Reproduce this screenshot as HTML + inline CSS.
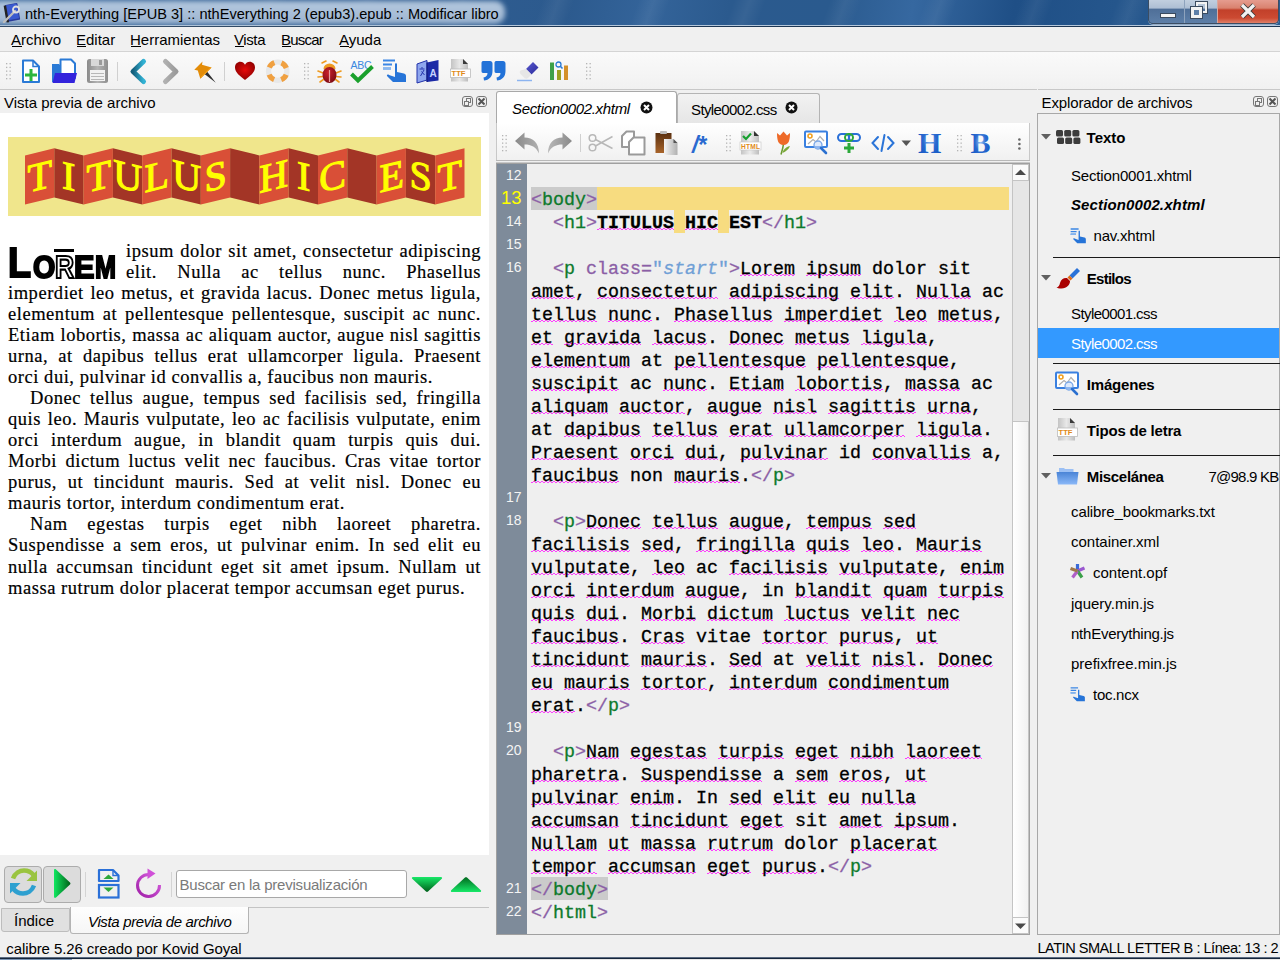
<!DOCTYPE html><html><head><meta charset="utf-8"><style>
html,body{margin:0;padding:0;width:1280px;height:960px;overflow:hidden;background:#f0f0f0;font-family:"Liberation Sans",sans-serif;}
#root{position:relative;width:1280px;height:960px;overflow:hidden;background:#f0f0f0;}
.wv{background-image:linear-gradient(90deg,#ff3cff 0,#ff3cff 2px,transparent 2px),linear-gradient(90deg,#ff3cff 0,#ff3cff 2px,transparent 2px);background-size:4px 1.4px,4px 1.4px;background-position:0 calc(100% - 3px),2px calc(100% - 4px);background-repeat:repeat-x;}
svg{position:absolute;overflow:visible}
</style></head><body><div id="root">
<div style="position:absolute;left:0px;top:0px;width:1280px;height:27px;background:linear-gradient(100deg,#3c6a9c 0px,#325f92 300px,#2c5a8e 560px,#34649a 640px,#2b5a8e 720px,#2a5a8e 820px,#3668a0 900px,#1f4f86 1000px,#25568c 1100px,#2c5d92 1280px)"></div>
<div style="position:absolute;left:0px;top:0px;width:1280px;height:27px;background:repeating-linear-gradient(110deg,rgba(255,255,255,0) 0px,rgba(255,255,255,0) 60px,rgba(255,255,255,0.06) 75px,rgba(255,255,255,0) 90px);"></div>
<div style="position:absolute;left:0px;top:25px;width:1280px;height:1px;background:#b5c8dc"></div>
<div style="position:absolute;left:0px;top:26px;width:1280px;height:1px;background:#1d3653"></div>
<div style="position:absolute;left:-10px;top:1px;width:515px;height:23px;background:linear-gradient(#b4c8de,#a9bfd8 50%,#9cb4d0);border-radius:10px;filter:blur(2.5px);"></div>
<div style="position:absolute;left:25.00px;top:6.84px;font-size:14.6px;line-height:14.6px;font-family:'Liberation Sans', sans-serif;white-space:pre;color:#000;">nth-Everything [EPUB 3] :: nthEverything 2 (epub3).epub :: Modificar libro</div>
<div style="position:absolute;left:1148px;top:-2px;width:129px;height:25px;border:1px solid #3b4d63;border-top:none;border-radius:0 0 5px 5px;overflow:hidden;box-shadow:0 1px 0 rgba(255,255,255,0.5);">
<div style="position:absolute;left:0;top:0;width:35px;height:25px;background:linear-gradient(#c6d3e2 0%,#aebfd4 40%,#4f6f98 45%,#5d7fa8 100%);"></div>
<div style="position:absolute;left:35px;top:0;width:1px;height:25px;background:#8ea3bd"></div>
<div style="position:absolute;left:36px;top:0;width:32px;height:25px;background:linear-gradient(#c6d3e2 0%,#aebfd4 40%,#4f6f98 45%,#5d7fa8 100%);"></div>
<div style="position:absolute;left:68px;top:0;width:1px;height:25px;background:#d9a79e"></div>
<div style="position:absolute;left:69px;top:0;width:60px;height:25px;background:linear-gradient(#e8a397 0%,#d9826f 40%,#c2402a 48%,#cc4a32 80%,#e08068 100%);"></div>
</div>
<div style="position:absolute;left:1160px;top:13px;width:16px;height:5px;background:#f4f4f4;border:1px solid #3a4a5e;box-sizing:border-box;"></div>
<div style="position:absolute;left:1191px;top:2px;width:16px;height:15px;"><div style="position:absolute;left:5px;top:0;width:11px;height:11px;border:2px solid #f2f2f2;box-sizing:border-box;outline:1px solid #3a4a5e;"></div><div style="position:absolute;left:0;top:5px;width:11px;height:11px;background:#5d7fa8;border:3px solid #f2f2f2;box-sizing:border-box;outline:1px solid #3a4a5e;"></div></div>
<svg style="left:1240px;top:4px" width="16" height="14" viewBox="0 0 16 14"><path d="M2 1 L14 13 M14 1 L2 13" stroke="#3a3a3a" stroke-width="5.2" stroke-linecap="butt"/><path d="M2 1 L14 13 M14 1 L2 13" stroke="#f2f2f2" stroke-width="3.2"/></svg>
<div style="position:absolute;left:0px;top:27px;width:1280px;height:24px;background:#f0f0f0"></div>
<div style="position:absolute;left:0px;top:51px;width:1280px;height:1px;background:#d4d4d4"></div>
<div style="position:absolute;left:11.00px;top:31.90px;font-size:15px;line-height:15px;font-family:'Liberation Sans', sans-serif;white-space:pre;letter-spacing:0px;">Archivo</div>
<div style="position:absolute;left:12px;top:46px;width:10px;height:1px;background:#000"></div>
<div style="position:absolute;left:76.00px;top:31.90px;font-size:15px;line-height:15px;font-family:'Liberation Sans', sans-serif;white-space:pre;letter-spacing:0px;">Editar</div>
<div style="position:absolute;left:77px;top:46px;width:9px;height:1px;background:#000"></div>
<div style="position:absolute;left:130.00px;top:31.90px;font-size:15px;line-height:15px;font-family:'Liberation Sans', sans-serif;white-space:pre;letter-spacing:0px;">Herramientas</div>
<div style="position:absolute;left:131px;top:46px;width:10px;height:1px;background:#000"></div>
<div style="position:absolute;left:234.00px;top:31.90px;font-size:15px;line-height:15px;font-family:'Liberation Sans', sans-serif;white-space:pre;letter-spacing:-0.4px;">Vista</div>
<div style="position:absolute;left:235px;top:46px;width:9px;height:1px;background:#000"></div>
<div style="position:absolute;left:281.00px;top:31.90px;font-size:15px;line-height:15px;font-family:'Liberation Sans', sans-serif;white-space:pre;letter-spacing:-0.77px;">Buscar</div>
<div style="position:absolute;left:282px;top:46px;width:9px;height:1px;background:#000"></div>
<div style="position:absolute;left:339.00px;top:31.90px;font-size:15px;line-height:15px;font-family:'Liberation Sans', sans-serif;white-space:pre;letter-spacing:0px;">Ayuda</div>
<div style="position:absolute;left:340px;top:46px;width:9px;height:1px;background:#000"></div>
<div style="position:absolute;left:0px;top:52px;width:1280px;height:37px;background:linear-gradient(#fafafa,#f1f1f1)"></div>
<div style="position:absolute;left:0px;top:89px;width:1280px;height:1px;background:#c8c8c8"></div>
<div style="position:absolute;left:4.00px;top:94.80px;font-size:15px;line-height:15px;font-family:'Liberation Sans', sans-serif;white-space:pre;">Vista previa de archivo</div>
<div style="position:absolute;left:462px;top:96px;width:11px;height:11px;border:1px solid #777;border-radius:3px;box-sizing:border-box;"></div>
<div style="position:absolute;left:466px;top:98px;width:5px;height:5px;border:1px solid #777;box-sizing:border-box;"></div>
<div style="position:absolute;left:464px;top:101px;width:5px;height:5px;border:1px solid #777;background:#f0f0f0;box-sizing:border-box;"></div>
<div style="position:absolute;left:476px;top:96px;width:11px;height:11px;border:1px solid #777;border-radius:3px;box-sizing:border-box;"></div>
<svg style="left:476px;top:96px" width="11" height="11"><path d="M2.5 2.5 L8.5 8.5 M8.5 2.5 L2.5 8.5" stroke="#555" stroke-width="2"/></svg>
<div style="position:absolute;left:0px;top:113px;width:489px;height:742px;background:#fff"></div>
<div style="position:absolute;left:8px;top:137px;width:473px;height:79px;background:#f0e68c"></div>
<svg style="left:0;top:0" width="1" height="1"><polygon points="25.00,155.4 54.30,148.2 54.30,197.4 25.00,204.6" fill="#d94f37"/></svg>
<svg style="left:0;top:0" width="1" height="1"><polygon points="54.30,148.2 83.60,155.4 83.60,204.6 54.30,197.4" fill="#a33526"/></svg>
<svg style="left:0;top:0" width="1" height="1"><polygon points="83.60,155.4 112.90,148.2 112.90,197.4 83.60,204.6" fill="#d94f37"/></svg>
<svg style="left:0;top:0" width="1" height="1"><polygon points="112.90,148.2 142.20,155.4 142.20,204.6 112.90,197.4" fill="#a33526"/></svg>
<svg style="left:0;top:0" width="1" height="1"><polygon points="142.20,155.4 171.50,148.2 171.50,197.4 142.20,204.6" fill="#d94f37"/></svg>
<svg style="left:0;top:0" width="1" height="1"><polygon points="171.50,148.2 200.80,155.4 200.80,204.6 171.50,197.4" fill="#a33526"/></svg>
<svg style="left:0;top:0" width="1" height="1"><polygon points="200.80,155.4 230.10,148.2 230.10,197.4 200.80,204.6" fill="#d94f37"/></svg>
<svg style="left:0;top:0" width="1" height="1"><polygon points="230.10,148.2 259.40,155.4 259.40,204.6 230.10,197.4" fill="#a33526"/></svg>
<svg style="left:0;top:0" width="1" height="1"><polygon points="259.40,155.4 288.70,148.2 288.70,197.4 259.40,204.6" fill="#d94f37"/></svg>
<svg style="left:0;top:0" width="1" height="1"><polygon points="288.70,148.2 318.00,155.4 318.00,204.6 288.70,197.4" fill="#a33526"/></svg>
<svg style="left:0;top:0" width="1" height="1"><polygon points="318.00,155.4 347.30,148.2 347.30,197.4 318.00,204.6" fill="#d94f37"/></svg>
<svg style="left:0;top:0" width="1" height="1"><polygon points="347.30,148.2 376.60,155.4 376.60,204.6 347.30,197.4" fill="#a33526"/></svg>
<svg style="left:0;top:0" width="1" height="1"><polygon points="376.60,155.4 405.90,148.2 405.90,197.4 376.60,204.6" fill="#d94f37"/></svg>
<svg style="left:0;top:0" width="1" height="1"><polygon points="405.90,148.2 435.20,155.4 435.20,204.6 405.90,197.4" fill="#a33526"/></svg>
<svg style="left:0;top:0" width="1" height="1"><polygon points="435.20,155.4 464.50,148.2 464.50,197.4 435.20,204.6" fill="#d94f37"/></svg>
<div style="position:absolute;left:25.00px;top:148px;width:29.30px;height:57px;transform:skewY(-13.8deg);transform-origin:0 0;"><div style="position:absolute;left:0;width:29.30px;top:11.5px;text-align:center;font-family:'Liberation Serif',serif;font-size:40px;line-height:40px;color:#ffff00;-webkit-text-stroke:1.1px #ffff00;">T</div></div>
<div style="position:absolute;left:54.30px;top:148px;width:29.30px;height:57px;transform:skewY(13.8deg);transform-origin:0 0;"><div style="position:absolute;left:0;width:29.30px;top:4.5px;text-align:center;font-family:'Liberation Serif',serif;font-size:40px;line-height:40px;color:#ffff00;-webkit-text-stroke:1.1px #ffff00;">I</div></div>
<div style="position:absolute;left:83.60px;top:148px;width:29.30px;height:57px;transform:skewY(-13.8deg);transform-origin:0 0;"><div style="position:absolute;left:0;width:29.30px;top:11.5px;text-align:center;font-family:'Liberation Serif',serif;font-size:40px;line-height:40px;color:#ffff00;-webkit-text-stroke:1.1px #ffff00;">T</div></div>
<div style="position:absolute;left:112.90px;top:148px;width:29.30px;height:57px;transform:skewY(13.8deg);transform-origin:0 0;"><div style="position:absolute;left:0;width:29.30px;top:4.5px;text-align:center;font-family:'Liberation Serif',serif;font-size:40px;line-height:40px;color:#ffff00;-webkit-text-stroke:1.1px #ffff00;">U</div></div>
<div style="position:absolute;left:142.20px;top:148px;width:29.30px;height:57px;transform:skewY(-13.8deg);transform-origin:0 0;"><div style="position:absolute;left:0;width:29.30px;top:11.5px;text-align:center;font-family:'Liberation Serif',serif;font-size:40px;line-height:40px;color:#ffff00;-webkit-text-stroke:1.1px #ffff00;">L</div></div>
<div style="position:absolute;left:171.50px;top:148px;width:29.30px;height:57px;transform:skewY(13.8deg);transform-origin:0 0;"><div style="position:absolute;left:0;width:29.30px;top:4.5px;text-align:center;font-family:'Liberation Serif',serif;font-size:40px;line-height:40px;color:#ffff00;-webkit-text-stroke:1.1px #ffff00;">U</div></div>
<div style="position:absolute;left:200.80px;top:148px;width:29.30px;height:57px;transform:skewY(-13.8deg);transform-origin:0 0;"><div style="position:absolute;left:0;width:29.30px;top:11.5px;text-align:center;font-family:'Liberation Serif',serif;font-size:40px;line-height:40px;color:#ffff00;-webkit-text-stroke:1.1px #ffff00;">S</div></div>
<div style="position:absolute;left:259.40px;top:148px;width:29.30px;height:57px;transform:skewY(-13.8deg);transform-origin:0 0;"><div style="position:absolute;left:0;width:29.30px;top:11.5px;text-align:center;font-family:'Liberation Serif',serif;font-size:40px;line-height:40px;color:#ffff00;-webkit-text-stroke:1.1px #ffff00;">H</div></div>
<div style="position:absolute;left:288.70px;top:148px;width:29.30px;height:57px;transform:skewY(13.8deg);transform-origin:0 0;"><div style="position:absolute;left:0;width:29.30px;top:4.5px;text-align:center;font-family:'Liberation Serif',serif;font-size:40px;line-height:40px;color:#ffff00;-webkit-text-stroke:1.1px #ffff00;">I</div></div>
<div style="position:absolute;left:318.00px;top:148px;width:29.30px;height:57px;transform:skewY(-13.8deg);transform-origin:0 0;"><div style="position:absolute;left:0;width:29.30px;top:11.5px;text-align:center;font-family:'Liberation Serif',serif;font-size:40px;line-height:40px;color:#ffff00;-webkit-text-stroke:1.1px #ffff00;">C</div></div>
<div style="position:absolute;left:376.60px;top:148px;width:29.30px;height:57px;transform:skewY(-13.8deg);transform-origin:0 0;"><div style="position:absolute;left:0;width:29.30px;top:11.5px;text-align:center;font-family:'Liberation Serif',serif;font-size:40px;line-height:40px;color:#ffff00;-webkit-text-stroke:1.1px #ffff00;">E</div></div>
<div style="position:absolute;left:405.90px;top:148px;width:29.30px;height:57px;transform:skewY(13.8deg);transform-origin:0 0;"><div style="position:absolute;left:0;width:29.30px;top:4.5px;text-align:center;font-family:'Liberation Serif',serif;font-size:40px;line-height:40px;color:#ffff00;-webkit-text-stroke:1.1px #ffff00;">S</div></div>
<div style="position:absolute;left:435.20px;top:148px;width:29.30px;height:57px;transform:skewY(-13.8deg);transform-origin:0 0;"><div style="position:absolute;left:0;width:29.30px;top:11.5px;text-align:center;font-family:'Liberation Serif',serif;font-size:40px;line-height:40px;color:#ffff00;-webkit-text-stroke:1.1px #ffff00;">T</div></div>
<div style="position:absolute;left:8px;top:243px;font-family:'Liberation Sans',sans-serif;font-weight:bold;color:#000;white-space:pre;-webkit-text-stroke:2px #000;"><span style="position:absolute;left:0px;top:-1px;font-size:42px;line-height:42px;display:inline-block;transform:scaleX(0.9);transform-origin:0 0">L</span><span style="position:absolute;left:24.5px;top:9px;font-size:31.5px;line-height:31.5px;display:inline-block;transform:scaleX(0.91);transform-origin:0 0">O</span><span style="position:absolute;left:46.5px;top:9px;font-size:31.5px;line-height:31.5px;display:inline-block;transform:scaleX(0.84);transform-origin:0 0;color:#fff;-webkit-text-stroke:2.2px #000;">R</span><span style="position:absolute;left:66px;top:9px;font-size:31.5px;line-height:31.5px;display:inline-block;transform:scaleX(0.97);transform-origin:0 0">E</span><span style="position:absolute;left:86.5px;top:9px;font-size:31.5px;line-height:31.5px;display:inline-block;transform:scaleX(0.8);transform-origin:0 0">M</span></div>
<div style="position:absolute;left:54px;top:249px;width:20px;height:3px;background:#000"></div>
<div style="position:absolute;left:126px;top:241.61px;width:355px;font-family:'Liberation Serif',serif;font-size:18.5px;line-height:18.5px;letter-spacing:0.54px;-webkit-text-stroke:0.2px #000;text-align:justify;text-align-last:justify;white-space:nowrap;color:#000;">ipsum dolor sit amet, consectetur adipiscing</div>
<div style="position:absolute;left:126px;top:262.67px;width:355px;font-family:'Liberation Serif',serif;font-size:18.5px;line-height:18.5px;letter-spacing:0.54px;-webkit-text-stroke:0.2px #000;text-align:justify;text-align-last:justify;white-space:nowrap;color:#000;">elit. Nulla ac tellus nunc. Phasellus</div>
<div style="position:absolute;left:8px;top:283.73px;width:473px;font-family:'Liberation Serif',serif;font-size:18.5px;line-height:18.5px;letter-spacing:0.54px;-webkit-text-stroke:0.2px #000;text-align:justify;text-align-last:justify;white-space:nowrap;color:#000;">imperdiet leo metus, et gravida lacus. Donec metus ligula,</div>
<div style="position:absolute;left:8px;top:304.79px;width:473px;font-family:'Liberation Serif',serif;font-size:18.5px;line-height:18.5px;letter-spacing:0.54px;-webkit-text-stroke:0.2px #000;text-align:justify;text-align-last:justify;white-space:nowrap;color:#000;">elementum at pellentesque pellentesque, suscipit ac nunc.</div>
<div style="position:absolute;left:8px;top:325.85px;width:473px;font-family:'Liberation Serif',serif;font-size:18.5px;line-height:18.5px;letter-spacing:0.54px;-webkit-text-stroke:0.2px #000;text-align:justify;text-align-last:justify;white-space:nowrap;color:#000;">Etiam lobortis, massa ac aliquam auctor, augue nisl sagittis</div>
<div style="position:absolute;left:8px;top:346.91px;width:473px;font-family:'Liberation Serif',serif;font-size:18.5px;line-height:18.5px;letter-spacing:0.54px;-webkit-text-stroke:0.2px #000;text-align:justify;text-align-last:justify;white-space:nowrap;color:#000;">urna, at dapibus tellus erat ullamcorper ligula. Praesent</div>
<div style="position:absolute;left:8px;top:367.97px;font-family:'Liberation Serif',serif;font-size:18.5px;line-height:18.5px;letter-spacing:0.54px;-webkit-text-stroke:0.2px #000;white-space:pre;color:#000;">orci dui, pulvinar id convallis a, faucibus non mauris.</div>
<div style="position:absolute;left:30px;top:389.03px;width:451px;font-family:'Liberation Serif',serif;font-size:18.5px;line-height:18.5px;letter-spacing:0.54px;-webkit-text-stroke:0.2px #000;text-align:justify;text-align-last:justify;white-space:nowrap;color:#000;">Donec tellus augue, tempus sed facilisis sed, fringilla</div>
<div style="position:absolute;left:8px;top:410.09px;width:473px;font-family:'Liberation Serif',serif;font-size:18.5px;line-height:18.5px;letter-spacing:0.54px;-webkit-text-stroke:0.2px #000;text-align:justify;text-align-last:justify;white-space:nowrap;color:#000;">quis leo. Mauris vulputate, leo ac facilisis vulputate, enim</div>
<div style="position:absolute;left:8px;top:431.15px;width:473px;font-family:'Liberation Serif',serif;font-size:18.5px;line-height:18.5px;letter-spacing:0.54px;-webkit-text-stroke:0.2px #000;text-align:justify;text-align-last:justify;white-space:nowrap;color:#000;">orci interdum augue, in blandit quam turpis quis dui.</div>
<div style="position:absolute;left:8px;top:452.21px;width:473px;font-family:'Liberation Serif',serif;font-size:18.5px;line-height:18.5px;letter-spacing:0.54px;-webkit-text-stroke:0.2px #000;text-align:justify;text-align-last:justify;white-space:nowrap;color:#000;">Morbi dictum luctus velit nec faucibus. Cras vitae tortor</div>
<div style="position:absolute;left:8px;top:473.27px;width:473px;font-family:'Liberation Serif',serif;font-size:18.5px;line-height:18.5px;letter-spacing:0.54px;-webkit-text-stroke:0.2px #000;text-align:justify;text-align-last:justify;white-space:nowrap;color:#000;">purus, ut tincidunt mauris. Sed at velit nisl. Donec eu</div>
<div style="position:absolute;left:8px;top:494.33px;font-family:'Liberation Serif',serif;font-size:18.5px;line-height:18.5px;letter-spacing:0.54px;-webkit-text-stroke:0.2px #000;white-space:pre;color:#000;">mauris tortor, interdum condimentum erat.</div>
<div style="position:absolute;left:30px;top:515.39px;width:451px;font-family:'Liberation Serif',serif;font-size:18.5px;line-height:18.5px;letter-spacing:0.54px;-webkit-text-stroke:0.2px #000;text-align:justify;text-align-last:justify;white-space:nowrap;color:#000;">Nam egestas turpis eget nibh laoreet pharetra.</div>
<div style="position:absolute;left:8px;top:536.45px;width:473px;font-family:'Liberation Serif',serif;font-size:18.5px;line-height:18.5px;letter-spacing:0.54px;-webkit-text-stroke:0.2px #000;text-align:justify;text-align-last:justify;white-space:nowrap;color:#000;">Suspendisse a sem eros, ut pulvinar enim. In sed elit eu</div>
<div style="position:absolute;left:8px;top:557.51px;width:473px;font-family:'Liberation Serif',serif;font-size:18.5px;line-height:18.5px;letter-spacing:0.54px;-webkit-text-stroke:0.2px #000;text-align:justify;text-align-last:justify;white-space:nowrap;color:#000;">nulla accumsan tincidunt eget sit amet ipsum. Nullam ut</div>
<div style="position:absolute;left:8px;top:578.57px;font-family:'Liberation Serif',serif;font-size:18.5px;line-height:18.5px;letter-spacing:0.54px;-webkit-text-stroke:0.2px #000;white-space:pre;color:#000;">massa rutrum dolor placerat tempor accumsan eget purus.</div>
<div style="position:absolute;left:0px;top:855px;width:489px;height:53px;background:#f0f0f0"></div>
<div style="position:absolute;left:176px;top:870px;width:231px;height:28px;background:#fff;border:1px solid #a8a8a8;border-radius:3px;box-sizing:border-box;"></div>
<div style="position:absolute;left:179.50px;top:877.30px;font-size:15px;line-height:15px;font-family:'Liberation Sans', sans-serif;white-space:pre;color:#7a7a7a;letter-spacing:-0.22px;">Buscar en la previsualización</div>
<div style="position:absolute;left:249px;top:907px;width:240px;height:1px;background:#c4c4c4"></div>
<div style="position:absolute;left:1px;top:908px;width:69px;height:24px;background:#e0e0e0;border:1px solid #bdbdbd;border-radius:0 0 3px 3px;box-sizing:border-box;"></div>
<div style="position:absolute;left:14.00px;top:912.80px;font-size:15px;line-height:15px;font-family:'Liberation Sans', sans-serif;white-space:pre;">Índice</div>
<div style="position:absolute;left:70px;top:907px;width:179px;height:27px;background:linear-gradient(#fefefe,#f6f6f6);border:1px solid #b4b4b4;border-top:none;border-radius:0 0 3px 3px;box-sizing:border-box;"></div>
<div style="position:absolute;left:88.00px;top:913.80px;font-size:15px;line-height:15px;font-family:'Liberation Sans', sans-serif;white-space:pre;font-style:italic;letter-spacing:-0.35px;">Vista previa de archivo</div>
<div style="position:absolute;left:6.30px;top:940.60px;font-size:15px;line-height:15px;font-family:'Liberation Sans', sans-serif;white-space:pre;letter-spacing:-0.09px;">calibre 5.26 creado por Kovid Goyal</div>
<div style="position:absolute;left:1037.40px;top:941.34px;font-size:14.6px;line-height:14.6px;font-family:'Liberation Sans', sans-serif;white-space:pre;letter-spacing:-0.5px;">LATIN SMALL LETTER B : Línea: 13 : 2</div>
<div style="position:absolute;left:0px;top:957px;width:1280px;height:1px;background:#5a6a80"></div>
<div style="position:absolute;left:0px;top:958px;width:1280px;height:1px;background:#15253a"></div>
<div style="position:absolute;left:0px;top:959px;width:72px;height:1px;background:#7a94b4"></div>
<div style="position:absolute;left:72px;top:959px;width:1208px;height:1px;background:#e8e8e8"></div>
<div style="position:absolute;left:496px;top:91px;width:181px;height:33px;background:#fff;border:1px solid #a9a9a9;border-bottom:none;border-radius:3px 3px 0 0;box-sizing:border-box;"></div>
<div style="position:absolute;left:512.00px;top:100.50px;font-size:15px;line-height:15px;font-family:'Liberation Sans', sans-serif;white-space:pre;font-style:italic;letter-spacing:-0.33px;">Section0002.xhtml</div>
<div style="position:absolute;left:677px;top:93px;width:143px;height:30px;background:linear-gradient(#f2f2f2,#e6e6e6);border:1px solid #b4b4b4;border-bottom:none;border-radius:3px 3px 0 0;box-sizing:border-box;"></div>
<div style="position:absolute;left:691.00px;top:101.60px;font-size:15px;line-height:15px;font-family:'Liberation Sans', sans-serif;white-space:pre;letter-spacing:-0.6px;">Style0002.css</div>
<svg style="left:640px;top:101px" width="13" height="13" viewBox="0 0 13 13"><circle cx="6.5" cy="6.5" r="6" fill="#111"/><path d="M4 4 L9 9 M9 4 L4 9" stroke="#fff" stroke-width="2"/></svg>
<svg style="left:785px;top:101px" width="13" height="13" viewBox="0 0 13 13"><circle cx="6.5" cy="6.5" r="6" fill="#111"/><path d="M4 4 L9 9 M9 4 L4 9" stroke="#fff" stroke-width="2"/></svg>
<div style="position:absolute;left:496px;top:123px;width:534px;height:38px;background:linear-gradient(#ffffff,#f0f0f0);border-left:1px solid #c8c8c8;border-right:1px solid #c8c8c8;box-sizing:border-box;"></div>
<div style="position:absolute;left:496px;top:160px;width:534px;height:1px;background:#b8b8b8"></div>
<div style="position:absolute;left:496px;top:162px;width:534px;height:1px;background:#c8c8c8"></div>
<div style="position:absolute;left:496px;top:163px;width:534px;height:772px;background:#efefef;border:1px solid #a0a0a0;box-sizing:border-box;"></div>
<div style="position:absolute;left:497px;top:164px;width:30px;height:770px;background:#7e8b9a"></div>
<div style="position:absolute;left:1012px;top:164px;width:17px;height:770px;background:#e6e6e6;border-left:1px solid #c4c4c4;box-sizing:border-box;"></div>
<div style="position:absolute;left:1012px;top:164px;width:17px;height:17px;background:#fbfbfb;border:1px solid #c4c4c4;box-sizing:border-box;"></div>
<svg style="left:1015px;top:169px" width="11" height="7"><path d="M0 6 L5.5 0.5 L11 6 Z" fill="#4a4a4a"/></svg>
<div style="position:absolute;left:1012px;top:421px;width:17px;height:513px;background:linear-gradient(90deg,#ffffff,#f1f1f1);border:1px solid #c4c4c4;box-sizing:border-box;"></div>
<div style="position:absolute;left:1012px;top:917px;width:17px;height:17px;background:#fbfbfb;border:1px solid #c4c4c4;box-sizing:border-box;"></div>
<svg style="left:1015px;top:923px" width="11" height="7"><path d="M0 0.5 L5.5 6 L11 0.5 Z" fill="#4a4a4a"/></svg>
<div style="position:absolute;left:531px;top:187px;width:478px;height:23px;background:#f7dc80"></div>
<div style="position:absolute;left:531px;top:187px;width:66px;height:23px;background:#cbcbcb"></div>
<div style="position:absolute;left:531px;top:877px;width:77px;height:23px;background:#cbcbcb"></div>
<div style="position:absolute;left:674px;top:210px;width:11px;height:23px;background:#f7dc80"></div>
<div style="position:absolute;left:718px;top:210px;width:11px;height:23px;background:#f7dc80"></div>
<div style="position:absolute;left:531.00px;top:168.85px;font-size:18.33px;line-height:18.33px;font-family:'Liberation Mono', monospace;white-space:pre;color:#000;-webkit-text-stroke:0.3px currentColor;"></div>
<div style="position:absolute;left:497px;width:24.5px;top:167.85px;font-size:14px;line-height:14px;text-align:right;color:#f4f4f4;font-weight:normal;">12</div>
<div style="position:absolute;left:531.00px;top:191.85px;font-size:18.33px;line-height:18.33px;font-family:'Liberation Mono', monospace;white-space:pre;color:#000;-webkit-text-stroke:0.3px currentColor;"><span style="color:#8b5fa6">&lt;</span><span style="color:#0d7a2c">body</span><span style="color:#8b5fa6">&gt;</span></div>
<div style="position:absolute;left:497px;width:24.5px;top:189.04px;font-size:18.5px;line-height:18.5px;text-align:right;color:#ffff00;font-weight:normal;">13</div>
<div style="position:absolute;left:531.00px;top:214.85px;font-size:18.33px;line-height:18.33px;font-family:'Liberation Mono', monospace;white-space:pre;color:#000;-webkit-text-stroke:0.3px currentColor;">  <span style="color:#8b5fa6">&lt;</span><span style="color:#0d7a2c">h1</span><span style="color:#8b5fa6">&gt;</span><b><span class="wv">TITULUS</span> <span class="wv">HIC</span> EST</b><span style="color:#8b5fa6">&lt;/</span><span style="color:#0d7a2c">h1</span><span style="color:#8b5fa6">&gt;</span></div>
<div style="position:absolute;left:497px;width:24.5px;top:213.85px;font-size:14px;line-height:14px;text-align:right;color:#f4f4f4;font-weight:normal;">14</div>
<div style="position:absolute;left:531.00px;top:237.85px;font-size:18.33px;line-height:18.33px;font-family:'Liberation Mono', monospace;white-space:pre;color:#000;-webkit-text-stroke:0.3px currentColor;"></div>
<div style="position:absolute;left:497px;width:24.5px;top:236.85px;font-size:14px;line-height:14px;text-align:right;color:#f4f4f4;font-weight:normal;">15</div>
<div style="position:absolute;left:531.00px;top:260.85px;font-size:18.33px;line-height:18.33px;font-family:'Liberation Mono', monospace;white-space:pre;color:#000;-webkit-text-stroke:0.3px currentColor;">  <span style="color:#8b5fa6">&lt;</span><span style="color:#0d7a2c">p</span> <span style="color:#8b5fa6">class=</span><span style="color:#6f9fd6">"<i>start</i>"</span><span style="color:#8b5fa6">&gt;</span><span class="wv">Lorem</span> <span class="wv">ipsum</span> dolor sit</div>
<div style="position:absolute;left:497px;width:24.5px;top:259.85px;font-size:14px;line-height:14px;text-align:right;color:#f4f4f4;font-weight:normal;">16</div>
<div style="position:absolute;left:531.00px;top:283.85px;font-size:18.33px;line-height:18.33px;font-family:'Liberation Mono', monospace;white-space:pre;color:#000;-webkit-text-stroke:0.3px currentColor;"><span class="wv">amet</span>, <span class="wv">consectetur</span> <span class="wv">adipiscing</span> <span class="wv">elit</span>. <span class="wv">Nulla</span> ac</div>
<div style="position:absolute;left:531.00px;top:306.85px;font-size:18.33px;line-height:18.33px;font-family:'Liberation Mono', monospace;white-space:pre;color:#000;-webkit-text-stroke:0.3px currentColor;"><span class="wv">tellus</span> <span class="wv">nunc</span>. <span class="wv">Phasellus</span> <span class="wv">imperdiet</span> <span class="wv">leo</span> <span class="wv">metus</span>,</div>
<div style="position:absolute;left:531.00px;top:329.85px;font-size:18.33px;line-height:18.33px;font-family:'Liberation Mono', monospace;white-space:pre;color:#000;-webkit-text-stroke:0.3px currentColor;"><span class="wv">et</span> <span class="wv">gravida</span> <span class="wv">lacus</span>. <span class="wv">Donec</span> <span class="wv">metus</span> <span class="wv">ligula</span>,</div>
<div style="position:absolute;left:531.00px;top:352.85px;font-size:18.33px;line-height:18.33px;font-family:'Liberation Mono', monospace;white-space:pre;color:#000;-webkit-text-stroke:0.3px currentColor;"><span class="wv">elementum</span> at <span class="wv">pellentesque</span> <span class="wv">pellentesque</span>,</div>
<div style="position:absolute;left:531.00px;top:375.85px;font-size:18.33px;line-height:18.33px;font-family:'Liberation Mono', monospace;white-space:pre;color:#000;-webkit-text-stroke:0.3px currentColor;"><span class="wv">suscipit</span> ac <span class="wv">nunc</span>. <span class="wv">Etiam</span> <span class="wv">lobortis</span>, <span class="wv">massa</span> ac</div>
<div style="position:absolute;left:531.00px;top:398.85px;font-size:18.33px;line-height:18.33px;font-family:'Liberation Mono', monospace;white-space:pre;color:#000;-webkit-text-stroke:0.3px currentColor;"><span class="wv">aliquam</span> <span class="wv">auctor</span>, <span class="wv">augue</span> <span class="wv">nisl</span> <span class="wv">sagittis</span> <span class="wv">urna</span>,</div>
<div style="position:absolute;left:531.00px;top:421.85px;font-size:18.33px;line-height:18.33px;font-family:'Liberation Mono', monospace;white-space:pre;color:#000;-webkit-text-stroke:0.3px currentColor;">at <span class="wv">dapibus</span> <span class="wv">tellus</span> <span class="wv">erat</span> <span class="wv">ullamcorper</span> <span class="wv">ligula</span>.</div>
<div style="position:absolute;left:531.00px;top:444.85px;font-size:18.33px;line-height:18.33px;font-family:'Liberation Mono', monospace;white-space:pre;color:#000;-webkit-text-stroke:0.3px currentColor;"><span class="wv">Praesent</span> <span class="wv">orci</span> <span class="wv">dui</span>, <span class="wv">pulvinar</span> id <span class="wv">convallis</span> a,</div>
<div style="position:absolute;left:531.00px;top:467.85px;font-size:18.33px;line-height:18.33px;font-family:'Liberation Mono', monospace;white-space:pre;color:#000;-webkit-text-stroke:0.3px currentColor;"><span class="wv">faucibus</span> non <span class="wv">mauris</span>.<span style="color:#8b5fa6">&lt;/</span><span style="color:#0d7a2c">p</span><span style="color:#8b5fa6">&gt;</span></div>
<div style="position:absolute;left:531.00px;top:490.85px;font-size:18.33px;line-height:18.33px;font-family:'Liberation Mono', monospace;white-space:pre;color:#000;-webkit-text-stroke:0.3px currentColor;"></div>
<div style="position:absolute;left:497px;width:24.5px;top:489.85px;font-size:14px;line-height:14px;text-align:right;color:#f4f4f4;font-weight:normal;">17</div>
<div style="position:absolute;left:531.00px;top:513.85px;font-size:18.33px;line-height:18.33px;font-family:'Liberation Mono', monospace;white-space:pre;color:#000;-webkit-text-stroke:0.3px currentColor;">  <span style="color:#8b5fa6">&lt;</span><span style="color:#0d7a2c">p</span><span style="color:#8b5fa6">&gt;</span><span class="wv">Donec</span> <span class="wv">tellus</span> <span class="wv">augue</span>, <span class="wv">tempus</span> <span class="wv">sed</span></div>
<div style="position:absolute;left:497px;width:24.5px;top:512.85px;font-size:14px;line-height:14px;text-align:right;color:#f4f4f4;font-weight:normal;">18</div>
<div style="position:absolute;left:531.00px;top:536.85px;font-size:18.33px;line-height:18.33px;font-family:'Liberation Mono', monospace;white-space:pre;color:#000;-webkit-text-stroke:0.3px currentColor;"><span class="wv">facilisis</span> <span class="wv">sed</span>, <span class="wv">fringilla</span> <span class="wv">quis</span> <span class="wv">leo</span>. <span class="wv">Mauris</span></div>
<div style="position:absolute;left:531.00px;top:559.85px;font-size:18.33px;line-height:18.33px;font-family:'Liberation Mono', monospace;white-space:pre;color:#000;-webkit-text-stroke:0.3px currentColor;"><span class="wv">vulputate</span>, <span class="wv">leo</span> ac <span class="wv">facilisis</span> <span class="wv">vulputate</span>, <span class="wv">enim</span></div>
<div style="position:absolute;left:531.00px;top:582.85px;font-size:18.33px;line-height:18.33px;font-family:'Liberation Mono', monospace;white-space:pre;color:#000;-webkit-text-stroke:0.3px currentColor;"><span class="wv">orci</span> <span class="wv">interdum</span> <span class="wv">augue</span>, in <span class="wv">blandit</span> <span class="wv">quam</span> <span class="wv">turpis</span></div>
<div style="position:absolute;left:531.00px;top:605.85px;font-size:18.33px;line-height:18.33px;font-family:'Liberation Mono', monospace;white-space:pre;color:#000;-webkit-text-stroke:0.3px currentColor;"><span class="wv">quis</span> <span class="wv">dui</span>. <span class="wv">Morbi</span> <span class="wv">dictum</span> <span class="wv">luctus</span> <span class="wv">velit</span> <span class="wv">nec</span></div>
<div style="position:absolute;left:531.00px;top:628.85px;font-size:18.33px;line-height:18.33px;font-family:'Liberation Mono', monospace;white-space:pre;color:#000;-webkit-text-stroke:0.3px currentColor;"><span class="wv">faucibus</span>. <span class="wv">Cras</span> vitae <span class="wv">tortor</span> <span class="wv">purus</span>, <span class="wv">ut</span></div>
<div style="position:absolute;left:531.00px;top:651.85px;font-size:18.33px;line-height:18.33px;font-family:'Liberation Mono', monospace;white-space:pre;color:#000;-webkit-text-stroke:0.3px currentColor;"><span class="wv">tincidunt</span> <span class="wv">mauris</span>. <span class="wv">Sed</span> at <span class="wv">velit</span> <span class="wv">nisl</span>. <span class="wv">Donec</span></div>
<div style="position:absolute;left:531.00px;top:674.85px;font-size:18.33px;line-height:18.33px;font-family:'Liberation Mono', monospace;white-space:pre;color:#000;-webkit-text-stroke:0.3px currentColor;"><span class="wv">eu</span> <span class="wv">mauris</span> <span class="wv">tortor</span>, <span class="wv">interdum</span> <span class="wv">condimentum</span></div>
<div style="position:absolute;left:531.00px;top:697.85px;font-size:18.33px;line-height:18.33px;font-family:'Liberation Mono', monospace;white-space:pre;color:#000;-webkit-text-stroke:0.3px currentColor;"><span class="wv">erat</span>.<span style="color:#8b5fa6">&lt;/</span><span style="color:#0d7a2c">p</span><span style="color:#8b5fa6">&gt;</span></div>
<div style="position:absolute;left:531.00px;top:720.85px;font-size:18.33px;line-height:18.33px;font-family:'Liberation Mono', monospace;white-space:pre;color:#000;-webkit-text-stroke:0.3px currentColor;"></div>
<div style="position:absolute;left:497px;width:24.5px;top:719.85px;font-size:14px;line-height:14px;text-align:right;color:#f4f4f4;font-weight:normal;">19</div>
<div style="position:absolute;left:531.00px;top:743.85px;font-size:18.33px;line-height:18.33px;font-family:'Liberation Mono', monospace;white-space:pre;color:#000;-webkit-text-stroke:0.3px currentColor;">  <span style="color:#8b5fa6">&lt;</span><span style="color:#0d7a2c">p</span><span style="color:#8b5fa6">&gt;</span><span class="wv">Nam</span> <span class="wv">egestas</span> <span class="wv">turpis</span> <span class="wv">eget</span> <span class="wv">nibh</span> <span class="wv">laoreet</span></div>
<div style="position:absolute;left:497px;width:24.5px;top:742.85px;font-size:14px;line-height:14px;text-align:right;color:#f4f4f4;font-weight:normal;">20</div>
<div style="position:absolute;left:531.00px;top:766.85px;font-size:18.33px;line-height:18.33px;font-family:'Liberation Mono', monospace;white-space:pre;color:#000;-webkit-text-stroke:0.3px currentColor;"><span class="wv">pharetra</span>. <span class="wv">Suspendisse</span> a <span class="wv">sem</span> <span class="wv">eros</span>, <span class="wv">ut</span></div>
<div style="position:absolute;left:531.00px;top:789.85px;font-size:18.33px;line-height:18.33px;font-family:'Liberation Mono', monospace;white-space:pre;color:#000;-webkit-text-stroke:0.3px currentColor;"><span class="wv">pulvinar</span> <span class="wv">enim</span>. In <span class="wv">sed</span> <span class="wv">elit</span> <span class="wv">eu</span> <span class="wv">nulla</span></div>
<div style="position:absolute;left:531.00px;top:812.85px;font-size:18.33px;line-height:18.33px;font-family:'Liberation Mono', monospace;white-space:pre;color:#000;-webkit-text-stroke:0.3px currentColor;"><span class="wv">accumsan</span> <span class="wv">tincidunt</span> <span class="wv">eget</span> sit <span class="wv">amet</span> <span class="wv">ipsum</span>.</div>
<div style="position:absolute;left:531.00px;top:835.85px;font-size:18.33px;line-height:18.33px;font-family:'Liberation Mono', monospace;white-space:pre;color:#000;-webkit-text-stroke:0.3px currentColor;"><span class="wv">Nullam</span> <span class="wv">ut</span> <span class="wv">massa</span> <span class="wv">rutrum</span> dolor <span class="wv">placerat</span></div>
<div style="position:absolute;left:531.00px;top:858.85px;font-size:18.33px;line-height:18.33px;font-family:'Liberation Mono', monospace;white-space:pre;color:#000;-webkit-text-stroke:0.3px currentColor;"><span class="wv">tempor</span> <span class="wv">accumsan</span> <span class="wv">eget</span> <span class="wv">purus</span>.<span style="color:#8b5fa6">&lt;/</span><span style="color:#0d7a2c">p</span><span style="color:#8b5fa6">&gt;</span></div>
<div style="position:absolute;left:531.00px;top:881.85px;font-size:18.33px;line-height:18.33px;font-family:'Liberation Mono', monospace;white-space:pre;color:#000;-webkit-text-stroke:0.3px currentColor;"><span style="color:#8b5fa6">&lt;/</span><span style="color:#0d7a2c">body</span><span style="color:#8b5fa6">&gt;</span></div>
<div style="position:absolute;left:497px;width:24.5px;top:880.85px;font-size:14px;line-height:14px;text-align:right;color:#f4f4f4;font-weight:normal;">21</div>
<div style="position:absolute;left:531.00px;top:904.85px;font-size:18.33px;line-height:18.33px;font-family:'Liberation Mono', monospace;white-space:pre;color:#000;-webkit-text-stroke:0.3px currentColor;"><span style="color:#8b5fa6">&lt;/</span><span style="color:#0d7a2c">html</span><span style="color:#8b5fa6">&gt;</span></div>
<div style="position:absolute;left:497px;width:24.5px;top:903.85px;font-size:14px;line-height:14px;text-align:right;color:#f4f4f4;font-weight:normal;">22</div>
<div style="position:absolute;left:1037px;top:89px;width:1px;height:846px;background:#f0f0f0"></div>
<div style="position:absolute;left:1041.50px;top:95.30px;font-size:15px;line-height:15px;font-family:'Liberation Sans', sans-serif;white-space:pre;letter-spacing:-0.11px;">Explorador de archivos</div>
<div style="position:absolute;left:1253px;top:96px;width:11px;height:11px;border:1px solid #777;border-radius:3px;box-sizing:border-box;"></div>
<div style="position:absolute;left:1257px;top:98px;width:5px;height:5px;border:1px solid #777;box-sizing:border-box;"></div>
<div style="position:absolute;left:1255px;top:101px;width:5px;height:5px;border:1px solid #777;background:#f0f0f0;box-sizing:border-box;"></div>
<div style="position:absolute;left:1267px;top:96px;width:11px;height:11px;border:1px solid #777;border-radius:3px;box-sizing:border-box;"></div>
<svg style="left:1267px;top:96px" width="11" height="11"><path d="M2.5 2.5 L8.5 8.5 M8.5 2.5 L2.5 8.5" stroke="#555" stroke-width="2"/></svg>
<div style="position:absolute;left:1037px;top:113px;width:243px;height:822px;background:#f0f0f0;border:1px solid #a8a8a8;box-sizing:border-box;"></div>
<div style="position:absolute;left:1038px;top:328px;width:241px;height:30px;background:#3399ff"></div>
<div style="position:absolute;left:1053px;top:257px;width:227px;height:1px;background:#1a1a1a"></div>
<div style="position:absolute;left:1053px;top:363px;width:227px;height:1px;background:#1a1a1a"></div>
<div style="position:absolute;left:1053px;top:409px;width:227px;height:1px;background:#1a1a1a"></div>
<div style="position:absolute;left:1053px;top:455px;width:227px;height:1px;background:#1a1a1a"></div>
<svg style="left:1041px;top:134px" width="10" height="6"><path d="M0 0 L10 0 L5 5.5 Z" fill="#606060"/></svg>
<svg style="left:1041px;top:275px" width="10" height="6"><path d="M0 0 L10 0 L5 5.5 Z" fill="#606060"/></svg>
<svg style="left:1041px;top:473px" width="10" height="6"><path d="M0 0 L10 0 L5 5.5 Z" fill="#606060"/></svg>
<div style="position:absolute;left:1086.60px;top:129.90px;font-size:15px;line-height:15px;font-family:'Liberation Sans', sans-serif;white-space:pre;font-weight:bold;">Texto</div>
<div style="position:absolute;left:1071.00px;top:168.00px;font-size:15px;line-height:15px;font-family:'Liberation Sans', sans-serif;white-space:pre;letter-spacing:-0.16px;">Section0001.xhtml</div>
<div style="position:absolute;left:1071.00px;top:197.30px;font-size:15px;line-height:15px;font-family:'Liberation Sans', sans-serif;white-space:pre;font-weight:bold;font-style:italic;letter-spacing:0.12px;">Section0002.xhtml</div>
<div style="position:absolute;left:1093.50px;top:228.30px;font-size:15px;line-height:15px;font-family:'Liberation Sans', sans-serif;white-space:pre;letter-spacing:-0.18px;">nav.xhtml</div>
<div style="position:absolute;left:1086.80px;top:271.20px;font-size:15px;line-height:15px;font-family:'Liberation Sans', sans-serif;white-space:pre;font-weight:bold;letter-spacing:-0.74px;">Estilos</div>
<div style="position:absolute;left:1071.00px;top:306.30px;font-size:15px;line-height:15px;font-family:'Liberation Sans', sans-serif;white-space:pre;letter-spacing:-0.58px;">Style0001.css</div>
<div style="position:absolute;left:1071.00px;top:335.70px;font-size:15px;line-height:15px;font-family:'Liberation Sans', sans-serif;white-space:pre;color:#fff;letter-spacing:-0.58px;">Style0002.css</div>
<div style="position:absolute;left:1086.80px;top:377.10px;font-size:15px;line-height:15px;font-family:'Liberation Sans', sans-serif;white-space:pre;font-weight:bold;letter-spacing:-0.19px;">Imágenes</div>
<div style="position:absolute;left:1086.80px;top:422.70px;font-size:15px;line-height:15px;font-family:'Liberation Sans', sans-serif;white-space:pre;font-weight:bold;letter-spacing:-0.2px;">Tipos de letra</div>
<div style="position:absolute;left:1086.80px;top:468.55px;font-size:15px;line-height:15px;font-family:'Liberation Sans', sans-serif;white-space:pre;font-weight:bold;letter-spacing:-0.32px;">Miscelánea</div>
<div style="position:absolute;left:1208.40px;top:468.55px;font-size:15px;line-height:15px;font-family:'Liberation Sans', sans-serif;white-space:pre;letter-spacing:-0.75px;">7@98.9 KB</div>
<div style="position:absolute;left:1071.00px;top:504.10px;font-size:15px;line-height:15px;font-family:'Liberation Sans', sans-serif;white-space:pre;letter-spacing:-0.1px;">calibre_bookmarks.txt</div>
<div style="position:absolute;left:1071.00px;top:534.10px;font-size:15px;line-height:15px;font-family:'Liberation Sans', sans-serif;white-space:pre;">container.xml</div>
<div style="position:absolute;left:1093.00px;top:565.30px;font-size:15px;line-height:15px;font-family:'Liberation Sans', sans-serif;white-space:pre;">content.opf</div>
<div style="position:absolute;left:1071.00px;top:595.80px;font-size:15px;line-height:15px;font-family:'Liberation Sans', sans-serif;white-space:pre;">jquery.min.js</div>
<div style="position:absolute;left:1071.00px;top:626.30px;font-size:15px;line-height:15px;font-family:'Liberation Sans', sans-serif;white-space:pre;letter-spacing:-0.24px;">nthEverything.js</div>
<div style="position:absolute;left:1071.00px;top:656.30px;font-size:15px;line-height:15px;font-family:'Liberation Sans', sans-serif;white-space:pre;">prefixfree.min.js</div>
<div style="position:absolute;left:1093.00px;top:686.90px;font-size:15px;line-height:15px;font-family:'Liberation Sans', sans-serif;white-space:pre;letter-spacing:-0.27px;">toc.ncx</div>
<svg style="left:2px;top:3px" width="20" height="21" viewBox="0 0 20 21"><g transform="rotate(-10 10 10)"><rect x="4" y="1" width="13" height="17" rx="1" fill="#2a3c9a"/><rect x="5" y="1.5" width="11" height="15" fill="#3a5ad0"/><rect x="3" y="1.5" width="2.5" height="17" fill="#222"/></g><path d="M2 19 L13 8" stroke="#bdbdbd" stroke-width="2.4" stroke-linecap="round"/><circle cx="14" cy="6.5" r="3" fill="none" stroke="#e0e0e0" stroke-width="1.8"/></svg>
<svg style="left:6px;top:63px" width="6" height="20" viewBox="0 0 6 20"><rect x="0.0" y="0.0" width="1.3" height="1.3" fill="#b4b4b4"/><rect x="3.5" y="0.0" width="1.3" height="1.3" fill="#b4b4b4"/><rect x="0.0" y="3.75" width="1.3" height="1.3" fill="#b4b4b4"/><rect x="3.5" y="3.75" width="1.3" height="1.3" fill="#b4b4b4"/><rect x="0.0" y="7.5" width="1.3" height="1.3" fill="#b4b4b4"/><rect x="3.5" y="7.5" width="1.3" height="1.3" fill="#b4b4b4"/><rect x="0.0" y="11.25" width="1.3" height="1.3" fill="#b4b4b4"/><rect x="3.5" y="11.25" width="1.3" height="1.3" fill="#b4b4b4"/><rect x="0.0" y="15.0" width="1.3" height="1.3" fill="#b4b4b4"/><rect x="3.5" y="15.0" width="1.3" height="1.3" fill="#b4b4b4"/></svg>
<svg style="left:21px;top:59px" width="20" height="25" viewBox="0 0 20 25"><path d="M2 1.5 H12 L18 7.5 V23 H2 Z" fill="#fff" stroke="#2a7ad6" stroke-width="2" stroke-linejoin="round"/><path d="M12 1.5 V7.5 H18" fill="none" stroke="#2a7ad6" stroke-width="1.5"/><path d="M10 10 V22 M4 16 H16" stroke="#2db63e" stroke-width="3"/></svg>
<svg style="left:51px;top:58px" width="27" height="26" viewBox="0 0 27 26"><path d="M1 6 H8 L10 8 V24 H1 Z" fill="#2a7ad6"/><path d="M9.5 1.5 H20 L24 5.5 V20 H9.5 Z" fill="#fff" stroke="#2a7ad6" stroke-width="2" stroke-linejoin="round"/><path d="M4 15 H26 L23.5 25 H1.5 Z" fill="#3324dc"/></svg>
<svg style="left:86px;top:58px" width="23" height="26" viewBox="0 0 23 26"><defs><linearGradient id="gsv" x1="0" x2="1"><stop offset="0" stop-color="#8a8a8a"/><stop offset="0.5" stop-color="#b4b4b4"/><stop offset="1" stop-color="#8e8e8e"/></linearGradient></defs><rect x="1" y="1" width="21" height="24" rx="2.5" fill="url(#gsv)"/><rect x="5" y="1" width="13" height="7" fill="#d8d8d8"/><rect x="13" y="2" width="3" height="5" fill="#9a9a9a"/><rect x="4" y="12" width="15" height="11" fill="#f2f2f2"/><path d="M5 15.5 H18 M5 18.5 H18 M5 21.5 H18" stroke="#b8b8b8" stroke-width="1"/></svg>
<div style="position:absolute;left:117px;top:62px;width:1px;height:19px;background:#d0d0d0"></div>
<svg style="left:128px;top:58px" width="20" height="27" viewBox="0 0 20 27"><defs><linearGradient id="gba" x1="0" x2="1"><stop offset="0" stop-color="#145f7c"/><stop offset="1" stop-color="#32b2d4"/></linearGradient></defs><path d="M15.5 3.5 L5 13.5 L15.5 23.5" fill="none" stroke="url(#gba)" stroke-width="5" stroke-linecap="round" stroke-linejoin="round"/></svg>
<svg style="left:161px;top:58px" width="20" height="27" viewBox="0 0 20 27"><defs><linearGradient id="gfw" x1="0" x2="1"><stop offset="0" stop-color="#b0b0b0"/><stop offset="1" stop-color="#9a9a9a"/></linearGradient></defs><path d="M4.5 3.5 L15 13.5 L4.5 23.5" fill="none" stroke="url(#gfw)" stroke-width="5" stroke-linecap="round" stroke-linejoin="round"/></svg>
<svg style="left:185px;top:55px" width="40" height="33" viewBox="0 0 40 33"><path d="M19.8 19.2 L22.2 16.8 L30.8 27.8 Z" fill="#2e2e2e"/><path d="M17.5 6.4 L17 9.8 L26.6 12.4 L15.3 23.7 L12.8 15.5 L9.3 14.8 Z" fill="#e38c08"/><path d="M26.6 12.4 L15.3 23.7 L16.2 21.5 L25 13 Z" fill="#f4a21a"/></svg>
<div style="position:absolute;left:224px;top:62px;width:1px;height:19px;background:#d0d0d0"></div>
<svg style="left:234px;top:61px" width="22" height="20" viewBox="0 0 22 20"><defs><radialGradient id="ght" cx="0.5" cy="0.45" r="0.6"><stop offset="0" stop-color="#e80a0a"/><stop offset="1" stop-color="#8a0000"/></radialGradient></defs><path d="M11 19 C6 15 1 11.5 1 6.5 C1 3 3.5 0.8 6.3 0.8 C8.5 0.8 10 2 11 3.8 C12 2 13.5 0.8 15.7 0.8 C18.5 0.8 21 3 21 6.5 C21 11.5 16 15 11 19 Z" fill="url(#ght)"/></svg>
<svg style="left:265px;top:59px" width="26" height="26" viewBox="0 0 26 26"><circle cx="12.7" cy="12.2" r="9.2" fill="none" stroke="#e8e8e8" stroke-width="5.2"/><circle cx="12.7" cy="12.2" r="9.2" fill="none" stroke="#f0a040" stroke-width="5.2" stroke-dasharray="7.2 7.25" stroke-dashoffset="-3.6"/></svg>
<svg style="left:304px;top:63px" width="6" height="20" viewBox="0 0 6 20"><rect x="0.0" y="0.0" width="1.3" height="1.3" fill="#b4b4b4"/><rect x="3.5" y="0.0" width="1.3" height="1.3" fill="#b4b4b4"/><rect x="0.0" y="3.75" width="1.3" height="1.3" fill="#b4b4b4"/><rect x="3.5" y="3.75" width="1.3" height="1.3" fill="#b4b4b4"/><rect x="0.0" y="7.5" width="1.3" height="1.3" fill="#b4b4b4"/><rect x="3.5" y="7.5" width="1.3" height="1.3" fill="#b4b4b4"/><rect x="0.0" y="11.25" width="1.3" height="1.3" fill="#b4b4b4"/><rect x="3.5" y="11.25" width="1.3" height="1.3" fill="#b4b4b4"/><rect x="0.0" y="15.0" width="1.3" height="1.3" fill="#b4b4b4"/><rect x="3.5" y="15.0" width="1.3" height="1.3" fill="#b4b4b4"/></svg>
<svg style="left:316px;top:58px" width="27" height="26" viewBox="0 0 27 26"><path d="M6 5 L10 3 M21 5 L17 3 M2 13 L7 15 M25 13 L20 15 M2 19 L7 18.5 M25 19 L20 18.5 M4 24 L8 21 M23 24 L19 21" stroke="#ee9a20" stroke-width="1.6" stroke-linecap="round"/><path d="M7.5 11 A6 5.5 0 0 1 19.5 11 Z" fill="#ee9a20"/><defs><radialGradient id="gbug" cx="0.4" cy="0.35" r="0.7"><stop offset="0" stop-color="#c8202c"/><stop offset="1" stop-color="#7a0a12"/></radialGradient></defs><ellipse cx="13.5" cy="17" rx="7" ry="8" fill="url(#gbug)"/><path d="M13.5 12 V24" stroke="#e8a0a0" stroke-width="1.2"/></svg>
<svg style="left:349px;top:59px" width="27" height="25" viewBox="0 0 27 25"><text x="1.5" y="9.5" font-family="Liberation Sans" font-size="10.5" fill="#3a88e0" letter-spacing="-0.3">ABC</text><path d="M2.5 15 L9 21.5 L23.5 7.5" fill="none" stroke="#1aa02c" stroke-width="4"/></svg>
<svg style="left:382px;top:59px" width="26" height="25" viewBox="0 0 26 25"><g transform="scale(1.0)"><path d="M1 1.5 H13 M1 5.5 H10 M1 9.5 H9" stroke="#3b86e4" stroke-width="2"/><path d="M1 9.5 H9" stroke="#8ab8f0" stroke-width="2"/><path d="M13 5 C13 4 15 4 15 5 V13 L22 14.5 C23.5 15 24 16 24 17 V23 H11 L5 17 C4.5 16 6 15 7 16 L13 18 Z" fill="#2674d8"/></g></svg>
<svg style="left:416px;top:59px" width="25" height="25" viewBox="0 0 25 25"><path d="M1 5 L11 1.5 V21 L1 24 Z" fill="#8ea6ee" stroke="#2233aa" stroke-width="1"/><path d="M11 3.5 L22.5 1 V21.5 L11 23 Z" fill="#1c2aa6"/><path d="M11 3.5 V23" stroke="#101a80" stroke-width="1.2"/><text x="13.5" y="17.5" font-family="Liberation Sans" font-size="10" font-weight="bold" fill="#c8d4ff">A</text><path d="M3.5 10 H8.5 M6 8 V9.5 M4.5 17 L8 11 M5.5 12.5 L8.5 16" stroke="#2233aa" stroke-width="1"/></svg>
<svg style="left:450px;top:58px" width="22" height="25" viewBox="0 0 22 25"><defs><linearGradient id="gttf" x1="0" x2="1"><stop offset="0" stop-color="#c4c4c4"/><stop offset="0.5" stop-color="#e8e8e8"/><stop offset="1" stop-color="#bdbdbd"/></linearGradient></defs><path d="M1 1 H13 L18 6 V23.5 H1 Z" fill="url(#gttf)"/><path d="M13 1 L18 6 H13 Z" fill="#3a3a3a"/><rect x="0.5" y="11" width="20" height="8.5" fill="#fff" stroke="#bcbcbc" stroke-width="0.8"/><text x="1.5" y="18" font-family="Liberation Sans" font-weight="bold" font-size="7.6" fill="#e08a18">TTF</text></svg>
<svg style="left:481px;top:60px" width="26" height="22" viewBox="0 0 26 22"><path d="M2 1 H9 C10.5 1 11.5 2 11.5 3.5 V11 C11.5 17 8 20 3 20.5 L2.5 17.5 C5 17 6.5 15.5 6.5 13 H2 C1 13 0.5 12 0.5 11 V3 C0.5 2 1 1 2 1 Z" fill="#2272d8"/><path d="M15 1 H22 C23.5 1 24.5 2 24.5 3.5 V11 C24.5 17 21 20 16 20.5 L15.5 17.5 C18 17 19.5 15.5 19.5 13 H15 C14 13 13.5 12 13.5 11 V3 C13.5 2 14 1 15 1 Z" fill="#2272d8"/></svg>
<svg style="left:515px;top:60px" width="25" height="22" viewBox="0 0 25 22"><defs><linearGradient id="ger" x1="0" x2="1" y1="0" y2="1"><stop offset="0" stop-color="#5a5ad0"/><stop offset="1" stop-color="#2a2a9a"/></linearGradient></defs><path d="M11 9 L18 2 L23.5 7.5 L16.5 14.5 Z" fill="url(#ger)"/><path d="M11 9 L16.5 14.5 L13 18 C12 19 10.5 19 9.5 18 L5.5 14 C4.5 13 4.5 11.5 5.5 10.5 Z" fill="#e6e6e6"/><path d="M2 20.5 H17" stroke="#8cb4f0" stroke-width="1.5"/></svg>
<svg style="left:549px;top:61px" width="22" height="21" viewBox="0 0 22 21"><rect x="1" y="1.5" width="4" height="17.5" fill="#3ea04a"/><rect x="8" y="9" width="4" height="10" fill="#9aa020"/><rect x="15" y="4.5" width="4" height="14.5" fill="#d4902a"/><circle cx="9.5" cy="3.5" r="2.5" fill="none" stroke="#2a7ad6" stroke-width="1.3"/><path d="M11.3 5.3 L13.5 7.5" stroke="#2a7ad6" stroke-width="1.6"/></svg>
<svg style="left:586px;top:63px" width="6" height="20" viewBox="0 0 6 20"><rect x="0.0" y="0.0" width="1.3" height="1.3" fill="#b4b4b4"/><rect x="3.5" y="0.0" width="1.3" height="1.3" fill="#b4b4b4"/><rect x="0.0" y="3.75" width="1.3" height="1.3" fill="#b4b4b4"/><rect x="3.5" y="3.75" width="1.3" height="1.3" fill="#b4b4b4"/><rect x="0.0" y="7.5" width="1.3" height="1.3" fill="#b4b4b4"/><rect x="3.5" y="7.5" width="1.3" height="1.3" fill="#b4b4b4"/><rect x="0.0" y="11.25" width="1.3" height="1.3" fill="#b4b4b4"/><rect x="3.5" y="11.25" width="1.3" height="1.3" fill="#b4b4b4"/><rect x="0.0" y="15.0" width="1.3" height="1.3" fill="#b4b4b4"/><rect x="3.5" y="15.0" width="1.3" height="1.3" fill="#b4b4b4"/></svg>
<svg style="left:502px;top:135px" width="6" height="20" viewBox="0 0 6 20"><rect x="0.0" y="0.0" width="1.3" height="1.3" fill="#b4b4b4"/><rect x="3.5" y="0.0" width="1.3" height="1.3" fill="#b4b4b4"/><rect x="0.0" y="3.75" width="1.3" height="1.3" fill="#b4b4b4"/><rect x="3.5" y="3.75" width="1.3" height="1.3" fill="#b4b4b4"/><rect x="0.0" y="7.5" width="1.3" height="1.3" fill="#b4b4b4"/><rect x="3.5" y="7.5" width="1.3" height="1.3" fill="#b4b4b4"/><rect x="0.0" y="11.25" width="1.3" height="1.3" fill="#b4b4b4"/><rect x="3.5" y="11.25" width="1.3" height="1.3" fill="#b4b4b4"/><rect x="0.0" y="15.0" width="1.3" height="1.3" fill="#b4b4b4"/><rect x="3.5" y="15.0" width="1.3" height="1.3" fill="#b4b4b4"/></svg>
<svg style="left:514px;top:131px" width="27" height="24" viewBox="0 0 27 24"><defs><linearGradient id="gun" x1="0" x2="1"><stop offset="0" stop-color="#8a8a8a"/><stop offset="1" stop-color="#b0b0b0"/></linearGradient></defs><path d="M1 10 L10.5 1.5 V6.5 C19 6.5 25 12 25 22.5 C22 16 17.5 13.5 10.5 13.5 V18.5 Z" fill="url(#gun)"/></svg>
<svg style="left:547px;top:131px" width="27" height="24" viewBox="0 0 27 24"><defs><linearGradient id="gre" x1="1" x2="0"><stop offset="0" stop-color="#8a8a8a"/><stop offset="1" stop-color="#b8b8b8"/></linearGradient></defs><path d="M25 10 L15.5 1.5 V6.5 C7 6.5 1 12 1 22.5 C4 16 8.5 13.5 15.5 13.5 V18.5 Z" fill="url(#gre)"/></svg>
<div style="position:absolute;left:580px;top:134px;width:1px;height:18px;background:#d0d0d0"></div>
<svg style="left:588px;top:133px" width="27" height="20" viewBox="0 0 27 20"><circle cx="4.5" cy="5" r="3.3" fill="none" stroke="#b8b8b8" stroke-width="1.5"/><circle cx="4.5" cy="14.5" r="3.3" fill="none" stroke="#b8b8b8" stroke-width="1.5"/><path d="M7.5 6.5 L24.5 15.5 M7.5 13 L24.5 3.5" stroke="#b8b8b8" stroke-width="1.5"/></svg>
<svg style="left:620px;top:130px" width="28" height="27" viewBox="0 0 28 27"><path d="M2 6 L6.5 1.5 H14 V17 H2 Z" fill="#fff" stroke="#9a9a9a" stroke-width="2" stroke-linejoin="round"/><path d="M9 12 L13.5 7.5 H24.5 V24.5 H9 Z" fill="#fff" stroke="#9a9a9a" stroke-width="2" stroke-linejoin="round"/></svg>
<svg style="left:654px;top:130px" width="26" height="27" viewBox="0 0 26 27"><defs><linearGradient id="gps" x1="0" x2="0" y1="0" y2="1"><stop offset="0" stop-color="#5a3010"/><stop offset="1" stop-color="#a8642a"/></linearGradient><linearGradient id="gpd" x1="0" x2="1"><stop offset="0" stop-color="#f4f4f4"/><stop offset="1" stop-color="#b0b0b0"/></linearGradient></defs><rect x="1.5" y="3" width="16" height="20" fill="url(#gps)"/><rect x="6" y="1" width="7" height="3" rx="1" fill="#bdbdbd"/><path d="M10 9 H19.5 L23.5 13 V25 H10 Z" fill="url(#gpd)"/><path d="M19.5 9 L23.5 13 H19.5 Z" fill="#555"/></svg>
<svg style="left:693px;top:133px" width="20" height="20" viewBox="0 0 20 20"><text x="-1" y="19.5" font-family="Liberation Sans" font-weight="bold" font-style="italic" font-size="23" fill="#2a6ad0" letter-spacing="-1">/*</text></svg>
<svg style="left:726px;top:135px" width="6" height="20" viewBox="0 0 6 20"><rect x="0.0" y="0.0" width="1.3" height="1.3" fill="#b4b4b4"/><rect x="3.5" y="0.0" width="1.3" height="1.3" fill="#b4b4b4"/><rect x="0.0" y="3.75" width="1.3" height="1.3" fill="#b4b4b4"/><rect x="3.5" y="3.75" width="1.3" height="1.3" fill="#b4b4b4"/><rect x="0.0" y="7.5" width="1.3" height="1.3" fill="#b4b4b4"/><rect x="3.5" y="7.5" width="1.3" height="1.3" fill="#b4b4b4"/><rect x="0.0" y="11.25" width="1.3" height="1.3" fill="#b4b4b4"/><rect x="3.5" y="11.25" width="1.3" height="1.3" fill="#b4b4b4"/><rect x="0.0" y="15.0" width="1.3" height="1.3" fill="#b4b4b4"/><rect x="3.5" y="15.0" width="1.3" height="1.3" fill="#b4b4b4"/></svg>
<svg style="left:739px;top:130px" width="24" height="26" viewBox="0 0 24 26"><defs><linearGradient id="ghd" x1="0" x2="1"><stop offset="0" stop-color="#c4c4c4"/><stop offset="0.5" stop-color="#ececec"/><stop offset="1" stop-color="#bdbdbd"/></linearGradient></defs><path d="M2 1 H15 L20 6 V24.5 H2 Z" fill="url(#ghd)"/><path d="M15 1 L20 6 H15 Z" fill="#333"/><path d="M4 6 L7 9 L12 3.5" fill="none" stroke="#18a030" stroke-width="2.2"/><rect x="1" y="12" width="21" height="8" fill="#fff" stroke="#c4c4c4" stroke-width="0.6"/><text x="2" y="18.6" font-family="Liberation Sans" font-weight="bold" font-size="6.6" fill="#e08a18" letter-spacing="0.2">HTML</text></svg>
<svg style="left:775px;top:130px" width="18" height="26" viewBox="0 0 18 26"><path d="M8.5 14 C8 18 7 21 6 24.5" stroke="#6a9a30" stroke-width="1.6" fill="none"/><path d="M8 21 C10 18 12.5 16.5 15 16 C14 19 11 21.5 7.5 23" fill="#7aa838"/><path d="M2 3 C2 10 3 15 8.5 15 C14 15 15 10 15 3 L12 5.5 L8.5 1.5 L5 5.5 Z" fill="#ee6a28"/></svg>
<svg style="left:804px;top:130px" width="26" height="26" viewBox="0 0 26 26"><rect x="1" y="1.5" width="22" height="15.5" rx="1" fill="#fff" stroke="#3a80e0" stroke-width="2"/><circle cx="6" cy="6" r="2" fill="none" stroke="#f0a020" stroke-width="1.6"/><path d="M4 14 L9 9.5 L12 12 L16 6.5 L20 11" fill="none" stroke="#b0b0b0" stroke-width="1.2"/><circle cx="14" cy="15" r="4" fill="rgba(200,220,250,0.6)" stroke="#7aa8e8" stroke-width="1.3"/><path d="M17 18 L22 23" stroke="#2a70d0" stroke-width="2.6" stroke-linecap="round"/></svg>
<svg style="left:837px;top:132px" width="26" height="22" viewBox="0 0 26 22"><rect x="1" y="2" width="11" height="7" rx="3.5" fill="none" stroke="#2a70d8" stroke-width="2"/><rect x="12" y="2" width="11" height="7" rx="3.5" fill="none" stroke="#2a70d8" stroke-width="2"/><rect x="8" y="2" width="8" height="7" rx="3.5" fill="none" stroke="#2ca83a" stroke-width="2"/><path d="M12 11 V21 M7 16 H17" stroke="#2ca83a" stroke-width="3"/></svg>
<svg style="left:871px;top:133px" width="24" height="20" viewBox="0 0 24 20"><path d="M7 4 L1.5 10 L7 16 M17 4 L22.5 10 L17 16 M13.5 2 L10.5 18" fill="none" stroke="#2a74d8" stroke-width="2" stroke-linecap="round"/></svg>
<svg style="left:901px;top:140px" width="11" height="7" viewBox="0 0 11 7"><path d="M0.5 0.5 H10 L5.25 6 Z" fill="#555"/></svg>
<svg style="left:917px;top:129px" width="28" height="26" viewBox="0 0 28 26"><defs><radialGradient id="ghb" cx="0.5" cy="0.45" r="0.55"><stop offset="0" stop-color="#8ab8f0"/><stop offset="0.5" stop-color="#2a6ad0"/><stop offset="1" stop-color="#1658c4"/></radialGradient></defs><text x="1" y="23.5" font-family="Liberation Serif" font-weight="bold" font-size="30" fill="url(#ghb)">H</text></svg>
<svg style="left:957px;top:135px" width="6" height="20" viewBox="0 0 6 20"><rect x="0.0" y="0.0" width="1.3" height="1.3" fill="#b4b4b4"/><rect x="3.5" y="0.0" width="1.3" height="1.3" fill="#b4b4b4"/><rect x="0.0" y="3.75" width="1.3" height="1.3" fill="#b4b4b4"/><rect x="3.5" y="3.75" width="1.3" height="1.3" fill="#b4b4b4"/><rect x="0.0" y="7.5" width="1.3" height="1.3" fill="#b4b4b4"/><rect x="3.5" y="7.5" width="1.3" height="1.3" fill="#b4b4b4"/><rect x="0.0" y="11.25" width="1.3" height="1.3" fill="#b4b4b4"/><rect x="3.5" y="11.25" width="1.3" height="1.3" fill="#b4b4b4"/><rect x="0.0" y="15.0" width="1.3" height="1.3" fill="#b4b4b4"/><rect x="3.5" y="15.0" width="1.3" height="1.3" fill="#b4b4b4"/></svg>
<svg style="left:969px;top:129px" width="26" height="26" viewBox="0 0 26 26"><defs><radialGradient id="gbb" cx="0.5" cy="0.5" r="0.55"><stop offset="0" stop-color="#9ac4f4"/><stop offset="0.5" stop-color="#2a6ad0"/><stop offset="1" stop-color="#1658c4"/></radialGradient></defs><text x="1.5" y="23.5" font-family="Liberation Serif" font-weight="bold" font-size="30" fill="url(#gbb)">B</text></svg>
<svg style="left:1017px;top:138px" width="5" height="12" viewBox="0 0 5 12"><circle cx="2.4" cy="1.5" r="1.3" fill="#666"/><circle cx="2.4" cy="6" r="1.3" fill="#666"/><circle cx="2.4" cy="10.5" r="1.3" fill="#666"/></svg>
<svg style="left:1055px;top:129px" width="26" height="17" viewBox="0 0 26 17"><rect x="1.0" y="1.0" width="7" height="6.5" rx="1.5" fill="#3c3c3c"/><rect x="9.2" y="1.0" width="7" height="6.5" rx="1.5" fill="#3c3c3c"/><rect x="17.4" y="1.0" width="7" height="6.5" rx="1.5" fill="#3c3c3c"/><rect x="2.0" y="8.5" width="7" height="6.5" rx="1.5" fill="#3c3c3c"/><rect x="10.2" y="8.5" width="7" height="6.5" rx="1.5" fill="#3c3c3c"/><rect x="18.4" y="8.5" width="7" height="6.5" rx="1.5" fill="#3c3c3c"/></svg>
<svg style="left:1070px;top:228px" width="17" height="16" viewBox="0 0 17 16"><g transform="scale(0.66)"><path d="M1 1.5 H13 M1 5.5 H10 M1 9.5 H9" stroke="#3b86e4" stroke-width="2"/><path d="M1 9.5 H9" stroke="#8ab8f0" stroke-width="2"/><path d="M13 5 C13 4 15 4 15 5 V13 L22 14.5 C23.5 15 24 16 24 17 V23 H11 L5 17 C4.5 16 6 15 7 16 L13 18 Z" fill="#2674d8"/></g></svg>
<svg style="left:1055px;top:266px" width="26" height="24" viewBox="0 0 26 24"><path d="M14.5 9.5 L22 2 L25 5 L17.5 12.5 Z" fill="#2a72d8"/><path d="M12.5 11.5 L14.5 9.5 L17.5 12.5 L15.5 14.5 Z" fill="#e06a14"/><path d="M12 12 L15 15 C15 19 12 22 6.5 22.5 C4 22.5 2 22 1.5 21.5 C3.5 21 4.5 19.5 5 17 C6 13 9 11.5 12 12 Z" fill="#aa0000"/></svg>
<svg style="left:1055px;top:371px" width="26" height="26" viewBox="0 0 26 26"><rect x="1" y="1.5" width="22" height="15.5" rx="1" fill="#fff" stroke="#3a80e0" stroke-width="2"/><circle cx="6" cy="6" r="2" fill="none" stroke="#f0a020" stroke-width="1.6"/><path d="M4 14 L9 9.5 L12 12 L16 6.5 L20 11" fill="none" stroke="#b0b0b0" stroke-width="1.2"/><circle cx="14" cy="15" r="4" fill="rgba(200,220,250,0.6)" stroke="#7aa8e8" stroke-width="1.3"/><path d="M17 18 L22 23" stroke="#2a70d0" stroke-width="2.6" stroke-linecap="round"/></svg>
<svg style="left:1057px;top:417px" width="22" height="25" viewBox="0 0 22 25"><defs><linearGradient id="gttf" x1="0" x2="1"><stop offset="0" stop-color="#c4c4c4"/><stop offset="0.5" stop-color="#e8e8e8"/><stop offset="1" stop-color="#bdbdbd"/></linearGradient></defs><path d="M1 1 H13 L18 6 V23.5 H1 Z" fill="url(#gttf)"/><path d="M13 1 L18 6 H13 Z" fill="#3a3a3a"/><rect x="0.5" y="11" width="20" height="8.5" fill="#fff" stroke="#bcbcbc" stroke-width="0.8"/><text x="1.5" y="18" font-family="Liberation Sans" font-weight="bold" font-size="7.6" fill="#e08a18">TTF</text></svg>
<svg style="left:1055px;top:467px" width="26" height="19" viewBox="0 0 26 19"><defs><linearGradient id="gfo" x1="0" x2="0" y1="0" y2="1"><stop offset="0" stop-color="#4a84d6"/><stop offset="1" stop-color="#8ab8f8"/></linearGradient></defs><path d="M4 1 H9 L10 2 H18.5 V6 H4 Z" fill="#9cc0f4"/><path d="M1.5 5 H23.5 L22 17.5 H3 Z" fill="url(#gfo)"/></svg>
<svg style="left:1069px;top:563px" width="19" height="18" viewBox="0 0 19 18"><path d="M8.5 8 L8.5 1" stroke="#3a6ad8" stroke-width="3.2"/><path d="M8.5 8 L15.5 5" stroke="#9a58d0" stroke-width="3.2"/><path d="M8.5 8 L13 14.5" stroke="#3aa048" stroke-width="3.2"/><path d="M8.5 8 L3.5 14.5" stroke="#b060c8" stroke-width="3.2"/><path d="M8.5 8 L1.5 5.5" stroke="#a0784a" stroke-width="3.2"/></svg>
<svg style="left:1070px;top:687px" width="16" height="15" viewBox="0 0 16 15"><g transform="scale(0.62)"><path d="M1 1.5 H13 M1 5.5 H10 M1 9.5 H9" stroke="#3b86e4" stroke-width="2"/><path d="M1 9.5 H9" stroke="#8ab8f0" stroke-width="2"/><path d="M13 5 C13 4 15 4 15 5 V13 L22 14.5 C23.5 15 24 16 24 17 V23 H11 L5 17 C4.5 16 6 15 7 16 L13 18 Z" fill="#2674d8"/></g></svg>
<div style="position:absolute;left:4px;top:866px;width:38px;height:37px;background:#dcdcdc;border:1px solid #acacac;border-radius:4px;box-sizing:border-box;"></div>
<div style="position:absolute;left:43px;top:866px;width:38px;height:37px;background:#dcdcdc;border:1px solid #acacac;border-radius:4px;box-sizing:border-box;"></div>
<svg style="left:8px;top:868px" width="31" height="32" viewBox="0 0 31 32"><path d="M5 10.5 C7 5 12 2.5 16 2.5 C20 2.5 23.5 4.5 25.5 7" fill="none" stroke="#9ac440" stroke-width="4.5"/><path d="M29 2.5 V13 H18.5 Z" fill="#9ac440"/><path d="M26 17.5 C24 23 19 25.5 15 25.5 C11 25.5 7.5 23.5 5.5 21" fill="none" stroke="#2ea0d0" stroke-width="4.5"/><path d="M2 25.5 V15 H12.5 Z" fill="#2ea0d0"/></svg>
<svg style="left:52px;top:868px" width="20" height="32" viewBox="0 0 20 32"><defs><linearGradient id="gpl" x1="0" x2="1"><stop offset="0" stop-color="#10e860"/><stop offset="1" stop-color="#006018"/></linearGradient></defs><path d="M2 2.5 C2 1 3 0.8 4 1.5 L18 14.5 C18.6 15 18.6 16 18 16.5 L4 29.5 C3 30.2 2 30 2 28.5 Z" fill="url(#gpl)"/></svg>
<div style="position:absolute;left:85px;top:872px;width:1px;height:25px;background:#d4d4d4"></div>
<svg style="left:97px;top:868px" width="24" height="32" viewBox="0 0 24 32"><path d="M2 2 H16 L21.5 7.5 V13 H2 Z" fill="none" stroke="#2a70d8" stroke-width="2.2" stroke-linejoin="round"/><path d="M16 2 V7.5 H21.5" fill="none" stroke="#2a70d8" stroke-width="1.4"/><rect x="2" y="17" width="19.5" height="12.5" fill="none" stroke="#2a70d8" stroke-width="2.2"/><path d="M6.5 11 L11.5 6.5 L16.5 11 Z" fill="#2ca83a"/><path d="M6.5 19.5 H16.5 L11.5 24 Z" fill="#2ca83a"/></svg>
<svg style="left:133px;top:868px" width="30" height="32" viewBox="0 0 30 32"><defs><linearGradient id="gpr" x1="0" x2="1" y1="1" y2="0"><stop offset="0" stop-color="#a020a8"/><stop offset="1" stop-color="#d860e0"/></linearGradient></defs><path d="M16 6.5 A11 11 0 1 0 26.5 17" fill="none" stroke="url(#gpr)" stroke-width="3"/><path d="M14.5 0.5 L22.5 5.5 L14.5 11 Z" fill="#d050d8"/></svg>
<div style="position:absolute;left:171px;top:872px;width:1px;height:25px;background:#d4d4d4"></div>
<svg style="left:411px;top:876px" width="32" height="17" viewBox="0 0 32 17"><defs><linearGradient id="gdn" x1="0" x2="0" y1="0" y2="1"><stop offset="0" stop-color="#18e868"/><stop offset="1" stop-color="#00601a"/></linearGradient></defs><path d="M2 1 H30 C31 1 31.5 2 30.8 2.8 L17 15.5 C16.5 16 15.5 16 15 15.5 L1.2 2.8 C0.5 2 1 1 2 1 Z" fill="url(#gdn)"/></svg>
<svg style="left:450px;top:876px" width="32" height="17" viewBox="0 0 32 17"><defs><linearGradient id="gup" x1="0" x2="0" y1="0" y2="1"><stop offset="0" stop-color="#006a1e"/><stop offset="1" stop-color="#18e868"/></linearGradient></defs><path d="M2 16 H30 C31 16 31.5 15 30.8 14.2 L17 1.5 C16.5 1 15.5 1 15 1.5 L1.2 14.2 C0.5 15 1 16 2 16 Z" fill="url(#gup)"/></svg>
</div></body></html>
